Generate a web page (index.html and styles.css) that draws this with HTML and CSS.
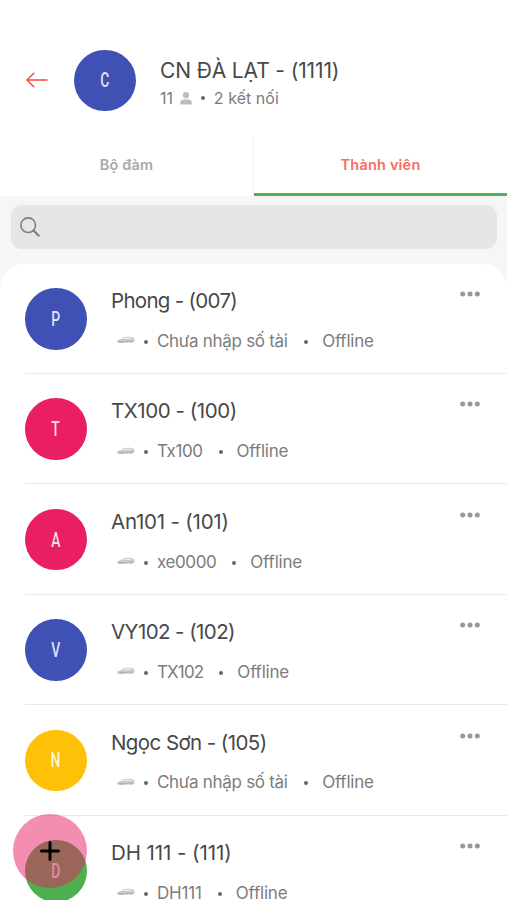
FILE: index.html
```html
<!DOCTYPE html>
<html lang="vi">
<head>
<meta charset="utf-8">
<title>CN ĐÀ LẠT</title>
<link rel="stylesheet" href="styles.css">
</head>
<body>
<svg class="defs" width="0" height="0">
  <symbol id="car" viewBox="0 0 18 8">
    <path d="M.3 5.200c0-1.200 1.400-1.700 3.700-2C6 1.500 7 .8 9.500.8h3.700c2.300 0 4 .9 4.300 2.500.2 1.200.1 2.500-.7 2.900L2 6.900C.8 6.900.3 6.200.3 5.200z" fill="#cbcbcb"/>
    <path d="M5.500 3.100 8 1.700h5.500l2 1.200z" fill="#ededed"/>
    <path d="M1 5.400h3M6 5.600h6" stroke="#aaa" stroke-width=".8"/>
    <circle cx="4.700" cy="5.900" r="1.200" fill="#b0b0b0"/><circle cx="14" cy="5.500" r="1.200" fill="#b0b0b0"/>
  </symbol>
  <symbol id="more" viewBox="0 0 20 6">
    <g fill="#989898"><circle cx="2.700" cy="3" r="2.500"/><circle cx="10" cy="3" r="2.500"/><circle cx="17.300" cy="3" r="2.500"/></g>
  </symbol>
</svg>
<main class="app">
  <header class="header">
    <svg class="back" viewBox="0 0 22 16"><path d="M21.500 8H1M8.300.8 1 8l7.300 7.200" fill="none" stroke="#f4473c" stroke-width="1.400"/></svg>
    <div class="avatar blue"><span>C</span></div>
    <div class="heading">
      <h1>CN ĐÀ LẠT - (1111)</h1>
      <p><span>11</span><svg class="person" viewBox="0 0 12 13"><circle cx="6" cy="3.200" r="3.100" fill="#bdbdbd"/><path d="M.3 12.600V10C.3 8.200 2 7.400 4 7.400h4c2 0 3.700.8 3.700 2.600v2.600z" fill="#bdbdbd"/></svg><i class="dot"></i><span class="links">2 kết nối</span></p>
    </div>
  </header>
  <nav class="tabs">
    <a class="tab">Bộ đàm</a>
    <a class="tab active">Thành viên</a>
  </nav>
  <div class="search">
    <div class="field"><svg viewBox="0 0 20 20"><circle cx="8.200" cy="8.200" r="7.300" fill="none" stroke="#7d7d7d" stroke-width="1.600"/><path d="m13.300 13.300 6 6" stroke="#7d7d7d" stroke-width="2.100"/></svg></div>
  </div>
  <ul class="list">
    <li class="row"><div class="avatar blue"><span>P</span></div><div class="info"><h2 class="tight">Phong - (007)</h2><p><svg class="car"><use href="#car"/></svg><i class="dot"></i><span class="plate long">Chưa nhập số tài</span><i class="dot"></i><span class="status">Offline</span></p></div><svg class="more"><use href="#more"/></svg></li>
    <li class="row"><div class="avatar pink"><span>T</span></div><div class="info"><h2>TX100 - (100)</h2><p><svg class="car"><use href="#car"/></svg><i class="dot"></i><span class="plate">Tx100</span><i class="dot"></i><span class="status">Offline</span></p></div><svg class="more"><use href="#more"/></svg></li>
    <li class="row"><div class="avatar pink"><span>A</span></div><div class="info"><h2 class="loose">An101 - (101)</h2><p><svg class="car"><use href="#car"/></svg><i class="dot"></i><span class="plate">xe0000</span><i class="dot"></i><span class="status">Offline</span></p></div><svg class="more"><use href="#more"/></svg></li>
    <li class="row"><div class="avatar blue"><span>V</span></div><div class="info"><h2 class="snug">VY102 - (102)</h2><p><svg class="car"><use href="#car"/></svg><i class="dot"></i><span class="plate snug">TX102</span><i class="dot"></i><span class="status">Offline</span></p></div><svg class="more"><use href="#more"/></svg></li>
    <li class="row"><div class="avatar amber"><span>N</span></div><div class="info"><h2 class="snug">Ngọc Sơn - (105)</h2><p><svg class="car"><use href="#car"/></svg><i class="dot"></i><span class="plate long">Chưa nhập số tài</span><i class="dot"></i><span class="status">Offline</span></p></div><svg class="more"><use href="#more"/></svg></li>
    <li class="row"><div class="avatar green"><span>D</span></div><div class="info"><h2 class="wide">DH 111 - (111)</h2><p><svg class="car"><use href="#car"/></svg><i class="dot"></i><span class="plate wide">DH111</span><i class="dot"></i><span class="status">Offline</span></p></div><svg class="more"><use href="#more"/></svg></li>
  </ul>
  <button class="fab" aria-label="+"><svg viewBox="0 0 20 20"><path d="M10 1.500v17M1.500 10h17" stroke="#000" stroke-width="3" stroke-linecap="round"/></svg></button>
</main>
</body>
</html>
```
FILE: styles.css
```css
* { box-sizing: border-box; }
body { margin: 0; font-family: Inter, "Noto Sans", sans-serif; background: #fff; }
h1, h2, p, ul { margin: 0; padding: 0; font-weight: 400; }
.defs { position: absolute; }
.app { position: relative; height: 900px; overflow: hidden; display: flex; flex-direction: column; background: #f6f6f6; }

.header { flex: none; height: 136px; padding: 50px 0 0 26px; display: flex; align-items: flex-start; background: #fff; }
.back { width: 22px; height: 16px; margin: 22px 26px 0 0; }
.avatar { flex: none; width: 61.500px; height: 61.500px; border-radius: 50%; display: flex; align-items: center; justify-content: center; color: rgba(255, 255, 255, .85); font: 500 21px/1 "Roboto", sans-serif; }
.avatar span { position: relative; top: .5px; transform: scaleX(.66); }
.blue { background: #3f51b5; }
.pink { background: #e91e63; }
.amber { background: #ffc107; }
.green { background: #4caf50; }
.header .avatar { margin-top: -.5px; }
.heading { margin-left: 24.500px; padding-top: 7px; white-space: nowrap; }
h1 { font-size: 21px; line-height: 28px; letter-spacing: -.13px; color: #484848; }
.heading p { display: flex; align-items: center; height: 26px; font-size: 16px; letter-spacing: -.1px; color: #7c7c7c; }
.heading .links { letter-spacing: .05px; }
.person { width: 12px; height: 13px; margin-left: 7px; }
.dot { width: 4.500px; height: 4.500px; border-radius: 50%; background: #666; }
.heading .dot { margin: 0 8.500px 0 9px; }

.tabs { flex: none; height: 60.300px; display: flex; background: #fff; }
.tab { flex: 1; display: flex; align-items: center; justify-content: center; padding-bottom: 3px; font-size: 14.500px; font-weight: 600; letter-spacing: .15px; color: #a9a9a9; }
.tab.active { letter-spacing: .2px; color: #fa6b5d; border-left: 1px solid #f5f5f5; box-shadow: inset 0 -3px #4fb254; }

.search { flex: none; height: 67.300px; padding: 8.500px 10px 0 11px; }
.field { height: 44px; padding-left: 9px; border-radius: 11px; background: #e6e6e6; display: flex; align-items: center; }
.field svg { width: 20px; height: 20px; }

.list { flex: none; list-style: none; background: #fff; border-radius: 24px 24px 0 0; }
.row { height: 110.400px; margin-left: 25px; padding-top: 24.500px; display: flex; align-items: flex-start; border-bottom: 1.500px solid #eaeaea; }
.info { margin-left: 24.500px; flex: 1; white-space: nowrap; }
h2 { font-size: 20.500px; line-height: 26px; letter-spacing: -.45px; color: #484848; }
h2.tight { letter-spacing: -.7px; }
h2.snug { letter-spacing: -.58px; }
h2.loose { letter-spacing: -.22px; }
h2.wide { letter-spacing: -.08px; }
.info p { display: flex; align-items: center; height: 24px; margin-top: 14.700px; padding-left: 5.500px; font-size: 17px; color: #7c7c7c; }
.plate { letter-spacing: -.4px; }
.plate.long { letter-spacing: -.3px; }
.plate.snug { letter-spacing: -.85px; }
.plate.wide { letter-spacing: -.2px; }
.status { letter-spacing: -.2px; }
.car { width: 18px; height: 8px; margin-bottom: 1px; }
.info .dot { width: 4px; height: 4px; margin: 2px 9px 0 9.500px; }
.info .plate + .dot { margin: 2px 14px 0 16px; }
.info .plate.long + .dot { margin-left: 16.500px; }
.more { width: 20px; height: 6px; margin: 3px 27px 0 0; }

.fab { position: absolute; left: 13px; top: 814px; width: 74px; height: 74px; padding: 0; border: 0; border-radius: 50%; background: rgba(233, 30, 99, .5); }
.fab svg { position: absolute; left: 27px; top: 27px; width: 20px; height: 20px; }
```
